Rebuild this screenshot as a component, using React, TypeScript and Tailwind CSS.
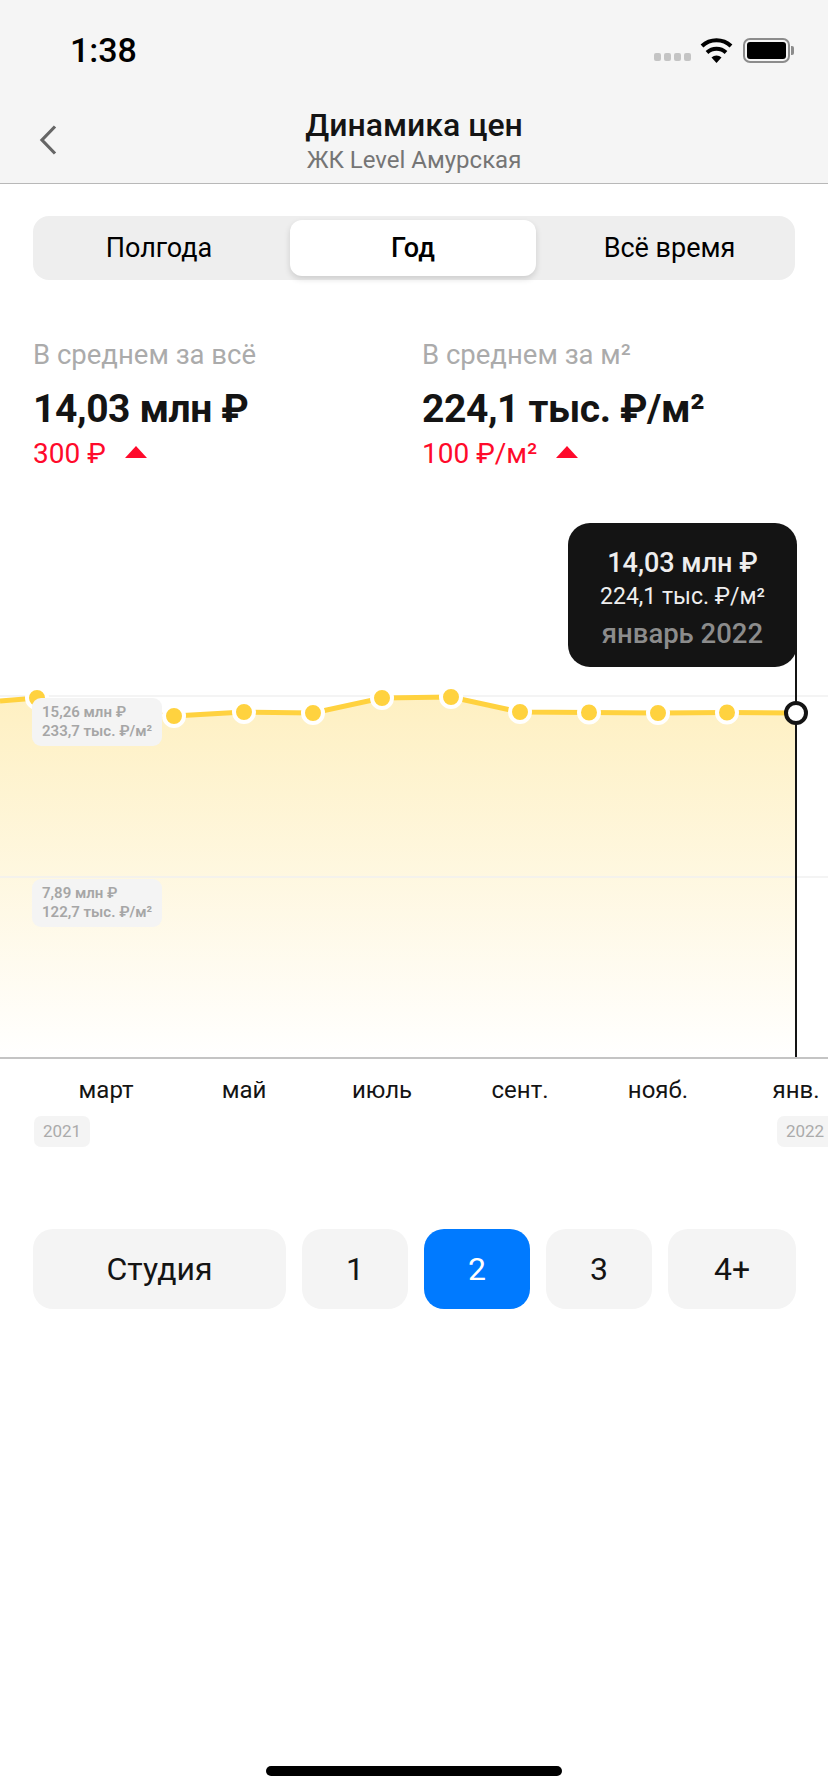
import React from 'react';

const points: [number, number][] = [
  [37, 698], [105, 712], [174, 716], [244, 712], [313, 713], [382, 698],
  [451, 697], [520, 712], [589, 712.5], [658, 713], [727, 712.5], [796, 713],
];

const linePath = 'M0 701 ' + points.map(([x, y]) => `L${x} ${y}`).join(' ');
const areaPath = `${linePath} L796 1058 L0 1058 Z`;

const months = ['март', 'май', 'июль', 'сент.', 'нояб.', 'янв.'];

const Metric = ({ label, value, delta, left }: { label: string; value: string; delta: string; left: string }) => (
  <div className={left}>
    <div className="text-[27.5px] leading-[34px] text-[#ababab]">{label}</div>
    <div className="mt-[13px] text-[39px] leading-[48px] font-bold tracking-[-0.4px] text-[#141414]">{value}</div>
    <div className="mt-[4px] flex items-center gap-[19px] text-[28px] leading-[34px] text-[#ff0a2b]">
      <span>{delta}</span>
      <svg width="22" height="12" viewBox="0 0 22 12" className="mt-[-4px]">
        <path d="M11 0 L22 12 L0 12 Z" fill="#ff0a2b" />
      </svg>
    </div>
  </div>
);

const PriceChip = ({ top, price, perMeter }: { top: string; price: string; perMeter: string }) => (
  <div className={`absolute left-[32px] ${top} rounded-[9px] bg-[#f4f4f4] px-[10px] py-[5px] text-[15px] leading-[19px] font-semibold text-[#a6a6a6]`}>
    <div>{price}</div>
    <div>{perMeter}</div>
  </div>
);

export default function App() {
  return (
    <div className="relative flex h-[1792px] w-[828px] flex-col overflow-hidden bg-white font-['Roboto',sans-serif]">
      <div className="h-[184px] shrink-0 border-b border-[#b8b8b8] bg-[#f5f5f5]">
        <div className="flex h-[100px] items-center justify-between pl-[70px] pr-[34px]">
          <span className="text-[34px] font-medium text-black">1:38</span>
          <div className="flex items-center">
            <div className="mt-[14px] flex gap-[3px]">
              <span className="h-[8px] w-[7px] rounded-[2px] bg-[#c4c4c4]"></span>
              <span className="h-[8px] w-[7px] rounded-[2px] bg-[#c4c4c4]"></span>
              <span className="h-[8px] w-[7px] rounded-[2px] bg-[#c4c4c4]"></span>
              <span className="h-[8px] w-[7px] rounded-[2px] bg-[#c4c4c4]"></span>
            </div>
            <svg width="33" height="25" viewBox="0 0 33 25" className="ml-[9px]">
              <path d="M16.5 25 L11.5 19.5 A7.5 7.5 0 0 1 21.5 19.5 Z" fill="#000" />
              <path d="M7 14.5 A14 14 0 0 1 26 14.5" fill="none" stroke="#000" strokeWidth="4" />
              <path d="M2 8 A21 21 0 0 1 31 8" fill="none" stroke="#000" strokeWidth="4" />
            </svg>
            <div className="ml-[10px] flex items-center">
              <div className="flex h-[25px] w-[47px] items-center justify-center rounded-[7px] border-2 border-[#8c8c8c]">
                <div className="h-[17px] w-[39px] rounded-[3px] bg-black"></div>
              </div>
              <div className="ml-[1px] h-[9px] w-[3px] rounded-r-[2px] bg-[#8c8c8c]"></div>
            </div>
          </div>
        </div>
        <div className="relative flex flex-col items-center">
          <svg width="18" height="30" viewBox="0 0 18 30" className="absolute left-[39px] top-[25px]">
            <path d="M16 1.5 L3 15 L16 28.5" fill="none" stroke="#666" strokeWidth="3.2" />
          </svg>
          <div className="mt-[5px] text-[32px] leading-[40px] font-medium text-[#141414]">Динамика цен</div>
          <div className="text-[24px] leading-[30px] text-[#757575]">ЖК Level Амурская</div>
        </div>
      </div>

      <div className="mx-[33px] mt-[32px] flex h-[64px] items-center rounded-[16px] bg-[#eeeeee] text-[27px] text-black">
        <div className="flex h-[56px] w-[257px] items-center justify-center pr-[5px]">Полгода</div>
        <div className="flex h-[56px] w-[246px] items-center justify-center rounded-[12px] bg-white font-medium shadow-[0_3px_6px_rgba(0,0,0,0.14)]">Год</div>
        <div className="flex h-[56px] flex-1 items-center justify-center pl-[8px]">Всё время</div>
      </div>

      <div className="mt-[58px] flex">
        <Metric left="ml-[33px] w-[389px]" label="В среднем за всё" value="14,03 млн ₽" delta="300 ₽" />
        <Metric left="" label="В среднем за м²" value="224,1 тыс. ₽/м²" delta="100 ₽/м²" />
      </div>

      <div className="relative mt-[51px] h-[537px] shrink-0 border-b-2 border-[#c4c4c4]">
        <svg width="828" height="535" viewBox="0 522 828 535" className="absolute left-0 top-0">
          <defs>
            <linearGradient id="area" x1="0" y1="697" x2="0" y2="1058" gradientUnits="userSpaceOnUse">
              <stop offset="0" stopColor="#fef0c2" />
              <stop offset="1" stopColor="#ffffff" />
            </linearGradient>
          </defs>
          <path d={areaPath} fill="url(#area)" />
          <line x1="0" y1="696" x2="828" y2="696" stroke="#f1f1f1" strokeWidth="1.5" />
          <line x1="0" y1="877" x2="828" y2="877" stroke="#f1f1f1" strokeWidth="1.5" />
          <path d={linePath} fill="none" stroke="#ffd23f" strokeWidth="5" />
          <line x1="796" y1="600" x2="796" y2="1058" stroke="#141414" strokeWidth="2" />
          {points.slice(0, -1).map(([x, y]) => (
            <circle key={x} cx={x} cy={y} r="10" fill="#ffd23f" stroke="#ffffff" strokeWidth="4" />
          ))}
          <circle cx="796" cy="713" r="10" fill="#ffffff" stroke="#141414" strokeWidth="4" />
        </svg>
        <PriceChip top="top-[176px]" price="15,26 млн ₽" perMeter="233,7 тыс. ₽/м²" />
        <PriceChip top="top-[357px]" price="7,89 млн ₽" perMeter="122,7 тыс. ₽/м²" />
        <div className="absolute left-[568px] top-[1px] flex h-[144px] w-[229px] flex-col items-center justify-center rounded-[22px] bg-[#141414] pt-[8px]">
          <div className="text-[27px] leading-[36px] font-medium text-[#eeeeee]">14,03 млн ₽</div>
          <div className="text-[23px] leading-[32px] text-[#eeeeee]">224,1 тыс. ₽/м²</div>
          <div className="mt-[2px] text-[27.5px] leading-[38px] font-medium text-[#8c8c8c]">январь 2022</div>
        </div>
      </div>

      <div className="relative h-[90px] shrink-0">
        <div className="absolute left-[37px] top-[13px] grid w-[828px] grid-cols-[138px_138px_138px_138px_138px_138px] text-center text-[24px] leading-[36px] text-[#141414]">
          {months.map((m) => (
            <span key={m}>{m}</span>
          ))}
        </div>
        <div className="absolute left-[34px] top-[57px] flex h-[31px] w-[56px] items-center justify-center rounded-[7px] bg-[#f4f4f4] text-[17px] text-[#ababab]">2021</div>
        <div className="absolute left-[777px] top-[57px] flex h-[31px] w-[60px] items-center justify-center rounded-[7px] bg-[#f4f4f4] pr-[4px] text-[17px] text-[#ababab]">2022</div>
      </div>

      <div className="ml-[33px] mt-[80px] flex gap-[16px] text-[32px] text-[#141414]">
        <div className="flex h-[80px] w-[253px] items-center justify-center rounded-[20px] bg-[#f4f4f4]">Студия</div>
        <div className="flex h-[80px] w-[106px] items-center justify-center rounded-[20px] bg-[#f4f4f4]">1</div>
        <div className="flex h-[80px] w-[106px] items-center justify-center rounded-[20px] bg-[#007aff] text-white">2</div>
        <div className="flex h-[80px] w-[106px] items-center justify-center rounded-[20px] bg-[#f4f4f4]">3</div>
        <div className="flex h-[80px] w-[128px] items-center justify-center rounded-[20px] bg-[#f4f4f4]">4+</div>
      </div>

      <div className="mt-auto mb-[16px] h-[10px] w-[296px] self-center rounded-full bg-black"></div>
    </div>
  );
}
